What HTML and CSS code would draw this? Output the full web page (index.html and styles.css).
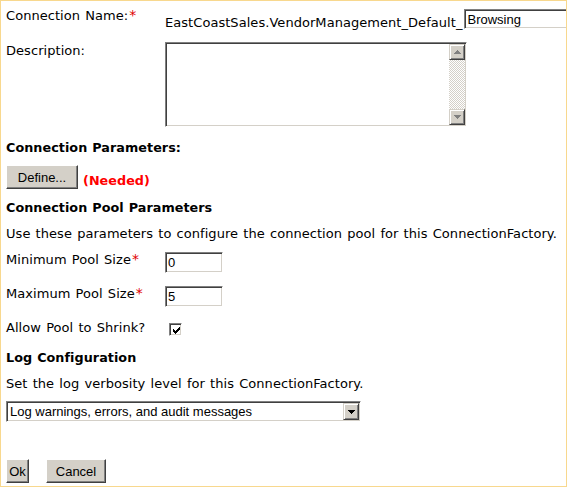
FILE: index.html
```html
<!DOCTYPE html>
<html>
<head>
<meta charset="utf-8">
<title>Connection</title>
<link rel="stylesheet" href="styles.css">
</head>
<body>
<div class="page">
  <div class="row row-name">
    <div class="label">Connection Name:<span class="req">*</span></div>
    <div class="name-value">
      <span class="prefix">EastCoastSales.VendorManagement_Default_</span>
      <input class="field name-input" type="text" value="Browsing">
    </div>
  </div>

  <div class="row row-desc">
    <div class="label label-desc">Description:</div>
    <div class="field textarea">
      <textarea class="ta"></textarea>
      <div class="vscroll">
        <span class="sbtn"><svg width="7" height="4" viewBox="0 0 7 4"><path d="M3 0H4V1H5V2H6V3H7V4H0V3H1V2H2V1H3Z" fill="#808080"/></svg></span>
        <span class="track"></span>
        <span class="sbtn"><svg width="7" height="4" viewBox="0 0 7 4"><path d="M0 0H7V1H6V2H5V3H4V4H3V3H2V2H1V1H0Z" fill="#808080"/></svg></span>
      </div>
    </div>
  </div>

  <h3 class="heading h-params">Connection Parameters:</h3>
  <div class="define-row">
    <button class="btn btn-define" type="button">Define...</button>
    <span class="needed">(Needed)</span>
  </div>

  <h3 class="heading h-pool">Connection Pool Parameters</h3>
  <p class="desc">Use these parameters to configure the connection pool for this ConnectionFactory.</p>

  <div class="row row-min">
    <div class="label">Minimum Pool Size<span class="req">*</span></div>
    <input class="field small-input" type="text" value="0">
  </div>
  <div class="row row-max">
    <div class="label">Maximum Pool Size<span class="req">*</span></div>
    <input class="field small-input" type="text" value="5">
  </div>
  <div class="row row-allow">
    <div class="label">Allow Pool to Shrink?</div>
    <span class="field checkbox"><svg width="7" height="7" viewBox="0 0 7 7" shape-rendering="crispEdges"><path d="M0 2V5H1V6H2V7H3V6H4V5H5V4H6V3H7V0H6V1H5V2H4V3H3V4H2V3H1V2Z" fill="#000"/></svg></span>
  </div>

  <h3 class="heading h-log">Log Configuration</h3>
  <p class="desc">Set the log verbosity level for this ConnectionFactory.</p>

  <div class="field select">
    <span class="select-text">Log warnings, errors, and audit messages</span>
    <span class="select-btn"><svg width="7" height="4" viewBox="0 0 7 4"><path d="M0 0H7V1H6V2H5V3H4V4H3V3H2V2H1V1H0Z" fill="#000"/></svg></span>
  </div>

  <div class="actions">
    <button class="btn btn-ok" type="button">Ok</button>
    <button class="btn btn-cancel" type="button">Cancel</button>
  </div>
</div>
</body>
</html>
```

FILE: styles.css
```css
html, body {
  margin: 0;
  padding: 0;
  background: #fff;
}

.page {
  width: 567px;
  height: 487px;
  box-sizing: border-box;
  border: 1px solid #f8d88e;
  padding: 7px 0 0 5px;
  overflow: hidden;
  font-family: "DejaVu Sans", Verdana, sans-serif;
  font-size: 13px;
  line-height: 15px;
  letter-spacing: 0.05px;
  word-spacing: 1px;
  color: #000;
  background: #fff;
}

.row {
  display: flex;
  align-items: flex-start;
}

.label {
  width: 159px;
  flex-shrink: 0;
  white-space: nowrap;
}

.req {
  color: #e00000;
  font-size: 14px;
  margin-left: 1px;
}

.name-value {
  display: flex;
  align-items: flex-start;
  flex-shrink: 0;
}

.prefix {
  margin-top: 7px;
  white-space: nowrap;
}

.field {
  box-sizing: border-box;
  border: 1px solid;
  border-color: #808080 #ffffff #ffffff #808080;
  box-shadow: inset 1px 1px 0 #404040, inset -1px -1px 0 #d4d0c8;
  background: #fff;
  font-family: "Liberation Sans", Arial, sans-serif;
  font-size: 13px;
  letter-spacing: 0;
  word-spacing: 0;
  color: #000;
  margin: 0;
  outline: none;
}

input.field {
  padding: 0 1px 0 2px;
}

.name-input {
  margin-top: 1px;
  margin-left: 2px;
  width: 160px;
  height: 20px;
  flex-shrink: 0;
}

.row-desc {
  margin-top: 12px;
}

.label-desc {
  padding-top: 1px;
}

.textarea {
  width: 302px;
  height: 85px;
  display: flex;
  padding: 1px;
  flex-shrink: 0;
}

.ta {
  flex: 1;
  border: 0;
  margin: 0;
  padding: 1px 2px;
  resize: none;
  overflow: hidden;
  outline: none;
  background: #fff;
  font-family: "Liberation Sans", Arial, sans-serif;
  font-size: 13px;
}

.vscroll {
  width: 16px;
  display: flex;
  flex-direction: column;
}

.sbtn {
  height: 16px;
  box-sizing: border-box;
  background: #d4d0c8;
  border: 1px solid;
  border-color: #d4d0c8 #404040 #404040 #d4d0c8;
  box-shadow: inset 1px 1px 0 #fff, inset -1px -1px 0 #808080;
  display: flex;
  align-items: center;
  justify-content: center;
}

.sbtn svg {
  display: block;
}

.track {
  flex: 1;
  background: repeating-conic-gradient(#d4d0c8 0 25%, #ffffff 0 50%) 0 0 / 2px 2px;
}

.heading {
  margin: 13px 0 0;
  font-size: 12.75px;
  line-height: 15px;
  font-weight: bold;
  letter-spacing: 0.05px;
  word-spacing: 0.5px;
}

.define-row {
  margin-top: 10px;
  display: flex;
  align-items: flex-end;
}

.btn {
  box-sizing: border-box;
  height: 24px;
  padding: 0;
  margin: 0;
  background: #d4d0c8;
  border: 1px solid;
  border-color: #ffffff #404040 #404040 #ffffff;
  box-shadow: inset -1px -1px 0 #808080;
  font-family: "Liberation Sans", Arial, sans-serif;
  font-size: 13px;
  letter-spacing: 0;
  word-spacing: 0;
  color: #000;
  border-radius: 0;
}

.btn-define {
  width: 72px;
}

.needed {
  color: #ff0000;
  font-weight: bold;
  font-size: 12.75px;
  letter-spacing: 0.05px;
  margin-left: 5px;
  margin-bottom: 1px;
}

.h-pool {
  margin-top: 11px;
}

.desc {
  margin: 11px 0 0;
  white-space: nowrap;
}

.row-min {
  margin-top: 11px;
}

.row-max,
.row-allow {
  margin-top: 13px;
}

.small-input {
  width: 58px;
  height: 21px;
}

.checkbox {
  width: 13px;
  height: 13px;
  margin: 3px 0 0 4px;
  display: flex;
  align-items: center;
  justify-content: center;
}

.checkbox svg {
  display: block;
  margin: 1px 0 0 1px;
}

.h-log {
  margin-top: 14px;
}

.select {
  margin-top: 10px;
  width: 355px;
  height: 21px;
  display: flex;
  padding: 1px;
}

.select-text {
  flex: 1;
  padding-left: 2px;
  line-height: 17px;
  white-space: nowrap;
}

.select-btn {
  width: 16px;
  height: 17px;
  box-sizing: border-box;
  background: #d4d0c8;
  border: 1px solid;
  border-color: #d4d0c8 #404040 #404040 #d4d0c8;
  box-shadow: inset 1px 1px 0 #fff, inset -1px -1px 0 #808080;
  display: flex;
  align-items: center;
  justify-content: center;
}

.select-btn svg {
  display: block;
}

.actions {
  margin-top: 37px;
  display: flex;
  gap: 17px;
}

.btn-ok {
  width: 23px;
}

.btn-cancel {
  width: 60px;
}
```
